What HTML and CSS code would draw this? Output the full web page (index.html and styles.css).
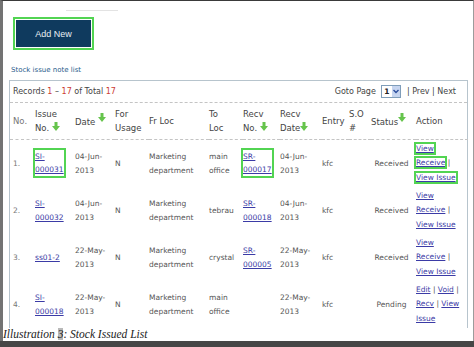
FILE: index.html
```html
<!DOCTYPE html>
<html>
<head>
    <meta charset="UTF-8">
    <title>Stock Issued List</title>
    <link rel="stylesheet" href="styles.css">
</head>
<body>
<div class="page">
    <div class="topline"></div>
    <button class="addnew">Add New</button>
    <p class="crumb">Stock issue note list</p>

    <div class="panel">
        <div class="records">
            <span>Records <span class="num">1</span> &ndash; <span class="num">17</span> of Total <span class="num">17</span></span>
            <span class="pager">Goto Page
                <span class="pagesel"><b>1</b><span class="drop"><svg width="6" height="5" viewBox="0 0 6 5"><path d="M0.5 1L3 3.5L5.5 1" fill="none" stroke="#2d4f9e" stroke-width="1.4"/></svg></span></span>
                | Prev | Next</span>
        </div>

        <table class="list">
            <colgroup>
                <col style="width:25px"><col style="width:40px"><col style="width:40px"><col style="width:34px">
                <col style="width:60px"><col style="width:34px"><col style="width:37px"><col style="width:42px">
                <col style="width:27px"><col style="width:22px"><col style="width:45px"><col style="width:52px">
            </colgroup>
            <thead>
            <tr>
                <th class="no">No.</th>
                <th>Issue<br>No. <svg class="sort" viewBox="0 0 8 9"><path d="M2.5 0h3v4h2.5L4 9L0 4h2.5z"/></svg></th>
                <th>Date <svg class="sort up" viewBox="0 0 8 9"><path d="M2.5 0h3v4h2.5L4 9L0 4h2.5z"/></svg></th>
                <th>For<br>Usage</th>
                <th>Fr Loc</th>
                <th>To<br>Loc</th>
                <th>Recv<br>No. <svg class="sort" viewBox="0 0 8 9"><path d="M2.5 0h3v4h2.5L4 9L0 4h2.5z"/></svg></th>
                <th>Recv<br>Date<svg class="sort" viewBox="0 0 8 9"><path d="M2.5 0h3v4h2.5L4 9L0 4h2.5z"/></svg></th>
                <th>Entry</th>
                <th>S.O<br>#</th>
                <th>Status<svg class="sort up" viewBox="0 0 8 9"><path d="M2.5 0h3v4h2.5L4 9L0 4h2.5z"/></svg></th>
                <th>Action</th>
            </tr>
            </thead>
            <tbody>
            <tr>
                <td class="no">1.</td>
                <td><a class="hit" href="#">SI-<br>000031</a></td>
                <td>04-Jun-<br>2013</td>
                <td>N</td>
                <td>Marketing<br>department</td>
                <td>main<br>office</td>
                <td><a class="hit" href="#">SR-<br>000017</a></td>
                <td>04-Jun-<br>2013</td>
                <td>kfc</td>
                <td></td>
                <td class="status">Received</td>
                <td class="act"><a class="hit" href="#">View</a><br><a class="hit" href="#">Receive</a> |<br><a class="hit" href="#">View Issue</a></td>
            </tr>
            <tr>
                <td class="no">2.</td>
                <td><a href="#">SI-<br>000032</a></td>
                <td>04-Jun-<br>2013</td>
                <td>N</td>
                <td>Marketing<br>department</td>
                <td>tebrau</td>
                <td><a href="#">SR-<br>000018</a></td>
                <td>04-Jun-<br>2013</td>
                <td>kfc</td>
                <td></td>
                <td class="status">Received</td>
                <td class="act"><a href="#">View</a><br><a href="#">Receive</a> |<br><a href="#">View Issue</a></td>
            </tr>
            <tr>
                <td class="no">3.</td>
                <td><a href="#">ss01-2</a></td>
                <td>22-May-<br>2013</td>
                <td>N</td>
                <td>Marketing<br>department</td>
                <td>crystal</td>
                <td><a href="#">SR-<br>000005</a></td>
                <td>22-May-<br>2013</td>
                <td>kfc</td>
                <td></td>
                <td class="status">Received</td>
                <td class="act"><a href="#">View</a><br><a href="#">Receive</a> |<br><a href="#">View Issue</a></td>
            </tr>
            <tr>
                <td class="no">4.</td>
                <td><a href="#">SI-<br>000018</a></td>
                <td>22-May-<br>2013</td>
                <td>N</td>
                <td>Marketing<br>department</td>
                <td>main<br>office</td>
                <td></td>
                <td>22-May-<br>2013</td>
                <td>kfc</td>
                <td></td>
                <td class="status">Pending</td>
                <td class="act"><a href="#">Edit</a> | <a href="#">Void</a> |<br><a href="#">Recv</a> | <a href="#">View<br>Issue</a></td>
            </tr>
            </tbody>
        </table>
    </div>

    <p class="caption">Illustration <span class="field">3</span>: Stock Issued List</p>
</div>
<div class="taskbar"></div>
</body>
</html>
```

FILE: styles.css
```css
body {
    margin: 0;
    background-color: #fff;
    font-family: "DejaVu Sans", Verdana, sans-serif;
    color: #555;
}

.page {
    height: 341px;
    box-sizing: border-box;
    overflow: hidden;
    border-top: 1px solid #3a3a3a;
    border-left: 3px solid #737373;
    border-right: 1px solid #9c9c9c;
}

.topline {
    margin: 9px 0 0 63px;
    width: 52px;
    height: 1px;
    background-color: #e3e3e3;
}

.addnew {
    display: block;
    margin: 9px 0 0 13px;
    width: 75px;
    height: 27px;
    padding: 0;
    border: 0;
    background-color: #0f3a5e;
    color: #e8eef3;
    font-family: "Liberation Sans", Arial, sans-serif;
    font-weight: normal;
    font-size: 9px;
    outline: 2px solid #52d452;
    outline-offset: 1px;
}

.crumb {
    margin: 18px 0 0 8px;
    font-size: 7px;
    line-height: 10px;
    color: #2b5d8c;
}

.panel {
    margin: 5px 5px 0 6px;
    border: 1px solid #b7c4cd;
    border-bottom: 0;
}

.records {
    display: flex;
    justify-content: space-between;
    align-items: center;
    height: 21px;
    padding: 0 11px 0 3px;
    border-bottom: 1px dashed #c4c4c4;
    font-size: 8px;
    color: #444;
}
.records .num {
    color: #cc3d33;
}

.pagesel {
    display: inline-flex;
    align-items: stretch;
    vertical-align: middle;
    margin: 0 3px;
    width: 18px;
    height: 11px;
    border: 1px solid #7f9db9;
    background-color: #fff;
}
.pagesel b {
    flex: 1;
    padding-left: 2px;
    font-size: 7.5px;
    line-height: 11px;
    color: #222;
}
.pagesel .drop {
    display: flex;
    align-items: center;
    justify-content: center;
    width: 8px;
    background-color: #c6d5f0;
}

.list {
    width: 100%;
    border-collapse: separate;
    border-spacing: 0;
    table-layout: fixed;
}
.list th {
    height: 36px;
    padding: 0;
    border-bottom: 1px dashed #c4c4c4;
    font-weight: normal;
    font-size: 8.5px;
    line-height: 14px;
    text-align: left;
    vertical-align: middle;
    color: #444;
}
.list td {
    height: 47px;
    padding: 0;
    font-size: 7.5px;
    line-height: 14px;
    vertical-align: middle;
    color: #555;
}
.list .no {
    padding-left: 3px;
    color: #777;
}
.list .status {
    text-align: center;
    padding-right: 4px;
}
.list .act {
    line-height: 14.5px;
}

.list a {
    color: #3b3ba6;
}
.hit {
    display: inline-block;
    line-height: 13px;
    outline: 2px solid #52d452;
}
.act .hit {
    line-height: 9px;
}

.sort {
    width: 8px;
    height: 9px;
    fill: #66c44c;
    vertical-align: 0;
}
.sort.up {
    vertical-align: 3px;
}

.caption {
    margin: 0;
    font-family: "Liberation Serif", "Times New Roman", serif;
    font-style: italic;
    font-size: 11.5px;
    line-height: 13px;
    color: #222;
}
.caption .field {
    background-color: #b9b9b9;
}

.taskbar {
    height: 6px;
    background-color: #464646;
}
```
